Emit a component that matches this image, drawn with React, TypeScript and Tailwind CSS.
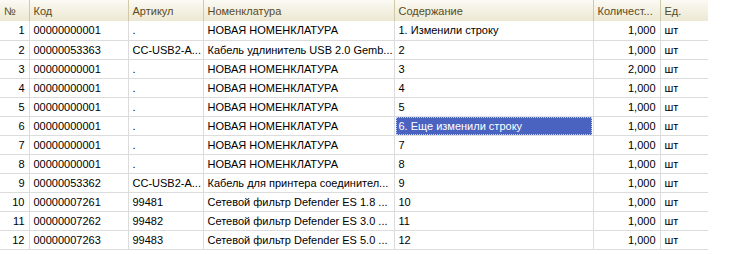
import React from "react";

type Row = {
  n: number;
  code: string;
  art: string;
  name: string;
  content: string;
  qty: string;
  unit: string;
};

const rows: Row[] = [
  { n: 1, code: "00000000001", art: ".", name: "НОВАЯ НОМЕНКЛАТУРА", content: "1. Изменили строку", qty: "1,000", unit: "шт" },
  { n: 2, code: "00000053363", art: "CC-USB2-A...", name: "Кабель удлинитель USB 2.0 Gemb...", content: "2", qty: "1,000", unit: "шт" },
  { n: 3, code: "00000000001", art: ".", name: "НОВАЯ НОМЕНКЛАТУРА", content: "3", qty: "2,000", unit: "шт" },
  { n: 4, code: "00000000001", art: ".", name: "НОВАЯ НОМЕНКЛАТУРА", content: "4", qty: "1,000", unit: "шт" },
  { n: 5, code: "00000000001", art: ".", name: "НОВАЯ НОМЕНКЛАТУРА", content: "5", qty: "1,000", unit: "шт" },
  { n: 6, code: "00000000001", art: ".", name: "НОВАЯ НОМЕНКЛАТУРА", content: "6. Еще изменили строку", qty: "1,000", unit: "шт" },
  { n: 7, code: "00000000001", art: ".", name: "НОВАЯ НОМЕНКЛАТУРА", content: "7", qty: "1,000", unit: "шт" },
  { n: 8, code: "00000000001", art: ".", name: "НОВАЯ НОМЕНКЛАТУРА", content: "8", qty: "1,000", unit: "шт" },
  { n: 9, code: "00000053362", art: "CC-USB2-A...", name: "Кабель для принтера соединител...", content: "9", qty: "1,000", unit: "шт" },
  { n: 10, code: "00000007261", art: "99481", name: "Сетевой фильтр Defender ES 1.8 ...", content: "10", qty: "1,000", unit: "шт" },
  { n: 11, code: "00000007262", art: "99482", name: "Сетевой фильтр Defender ES 3.0 ...", content: "11", qty: "1,000", unit: "шт" },
  { n: 12, code: "00000007263", art: "99483", name: "Сетевой фильтр Defender ES 5.0 ...", content: "12", qty: "1,000", unit: "шт" },
];

const headers = [
  { label: "№", w: "w-[29px]" },
  { label: "Код", w: "w-[99px]" },
  { label: "Артикул", w: "w-[75px]" },
  { label: "Номенклатура", w: "w-[191px]" },
  { label: "Содержание", w: "w-[199px]" },
  { label: "Количест...", w: "w-[67px]" },
  { label: "Ед.", w: "w-[48px]" },
];

const cell = "h-[19px] border-b border-r border-[#dcdcdc] px-[4px] whitespace-nowrap overflow-hidden align-middle";

export default function App() {
  return (
    <div className="w-[749px] h-[254px] bg-white overflow-hidden" style={{ fontFamily: '"Liberation Sans", Arial, sans-serif' }}>
      <table className="table-fixed border-collapse text-[11px] leading-[18px] text-black w-[708px]">
        <thead>
          <tr className="bg-gradient-to-b from-[#fbfaf4] to-[#ece8d2]">
            {headers.map((h, i) => (
              <th
                key={h.label}
                className={`${h.w} h-[21px] px-[4px] text-left font-normal text-[#5b4b22] whitespace-nowrap ${
                  i < headers.length - 1 ? "border-r border-[#d2c9a8]" : ""
                }`}
              >
                {h.label}
              </th>
            ))}
          </tr>
        </thead>
        <tbody>
          {rows.map((r) => (
            <tr key={r.n}>
              <td className={`${cell} text-right`}>{r.n}</td>
              <td className={cell}>{r.code}</td>
              <td className={cell}>{r.art}</td>
              <td className={cell}>{r.name}</td>
              {r.n === 6 ? (
                <td className="h-[19px] border-b border-r border-[#dcdcdc] p-0 align-middle">
                  <div className="h-[18px] mx-[1px] bg-[#4a63c0] outline-1 outline-dotted outline-[#c9d2f0] -outline-offset-1 px-[3px] text-white whitespace-nowrap">
                    {r.content}
                  </div>
                </td>
              ) : (
                <td className={cell}>{r.content}</td>
              )}
              <td className={`${cell} text-right`}>{r.qty}</td>
              <td className={`${cell} border-r-0`}>{r.unit}</td>
            </tr>
          ))}
        </tbody>
      </table>
    </div>
  );
}
